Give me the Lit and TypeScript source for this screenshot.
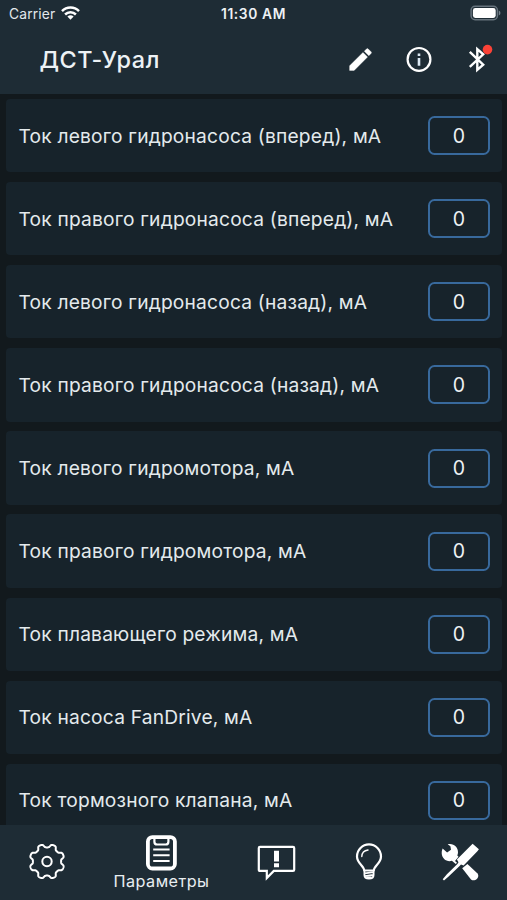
import { LitElement, html, css, svg } from "lit";
import { customElement } from "lit/decorators.js";
import { styleMap } from "lit/directives/style-map.js";

interface Param {
  label: string;
  value: number;
}

const PARAMS: Param[] = [
  { label: "Ток левого гидронасоса (вперед), мА", value: 0 },
  { label: "Ток правого гидронасоса (вперед), мА", value: 0 },
  { label: "Ток левого гидронасоса (назад), мА", value: 0 },
  { label: "Ток правого гидронасоса (назад), мА", value: 0 },
  { label: "Ток левого гидромотора, мА", value: 0 },
  { label: "Ток правого гидромотора, мА", value: 0 },
  { label: "Ток плавающего режима, мА", value: 0 },
  { label: "Ток насоса FanDrive, мА", value: 0 },
  { label: "Ток тормозного клапана, мА", value: 0 },
];

/** Outline of an eight-toothed cog centred on (20, 20). */
function gearPath(): string {
  const points: string[] = [];
  for (let i = 0; i < 240; i++) {
    const a = (i / 240) * Math.PI * 2;
    const wave = Math.tanh(-2 * Math.cos(8 * a)) / Math.tanh(2);
    const r = 15.8 + 1.7 * wave;
    points.push(`${(20 + r * Math.cos(a)).toFixed(2)} ${(19.5 + r * Math.sin(a)).toFixed(2)}`);
  }
  return `M${points.join("L")}Z`;
}
const GEAR = gearPath();

@customElement("status-bar")
class StatusBar extends LitElement {
  static styles = css`
    :host {
      display: grid;
      grid-template-columns: 1fr auto 1fr;
      align-items: center;
      height: 28px;
      padding: 0 6px 0 9px;
      font-size: 13.8px;
      color: #e2e8ec;
    }
    .carrier { display: flex; align-items: center; gap: 6px; letter-spacing: 0.15px; }
    .time { font-weight: 600; font-size: 13.8px; letter-spacing: 0.6px; color: #edf1f4; margin: -1px 0 0 -3px; }
    .battery { justify-self: end; margin-top: -2px; }
    svg { display: block; }
    .wifi { margin-top: -2px; }
  `;
  render() {
    return html`
      <div class="carrier">
        <span>Carrier</span>
        <svg class="wifi" width="19" height="14" viewBox="0 0 19 14" fill="none" stroke="#fff" stroke-width="2.5">
          <path d="M1 5.1a12 12 0 0 1 17 0" />
          <path d="M4.1 8.5a7.6 7.6 0 0 1 10.8 0" />
          <path d="M9.5 13.7 6.4 10.6a4.5 4.5 0 0 1 6.2 0Z" fill="#fff" stroke="none" />
        </svg>
      </div>
      <div class="time">11:30 AM</div>
      <svg class="battery" width="31" height="16" viewBox="0 0 31 16">
        <rect x="1.1" y="1.3" width="26.3" height="13.4" rx="4" fill="none" stroke="#66737d" stroke-width="1.5" />
        <rect x="2.9" y="3.1" width="22.8" height="9.8" rx="2.4" fill="#fff" />
        <path d="M28.8 5.6q1.7.8 1.7 2.4t-1.7 2.4Z" fill="#73808a" />
      </svg>
    `;
  }
}

@customElement("app-header")
class AppHeader extends LitElement {
  static styles = css`
    :host {
      display: flex;
      align-items: center;
      height: 66px;
      padding: 0 13px 4px 39.5px;
      box-sizing: border-box;
    }
    h1 {
      flex: 1;
      margin: 0;
      font-size: 23.4px;
      font-weight: 500;
      line-height: 30px;
      letter-spacing: 0.55px;
      color: #edf2f5;
      padding-top: 2px;
    }
    .actions { display: flex; gap: 28px; }
    svg { display: block; }
  `;
  render() {
    return html`
      <h1>ДСТ-Урал</h1>
      <div class="actions">
        <svg width="31" height="31" viewBox="-0.8 -0.8 25.6 25.6" fill="#fff">
          <path d="M3 17.25V21h3.75L17.81 9.94l-3.75-3.75L3 17.25zM20.71 7.04a1 1 0 0 0 0-1.41l-2.34-2.34a1 1 0 0 0-1.41 0l-1.83 1.83 3.75 3.75 1.83-1.83z" stroke="#fff" stroke-width=".3" />
        </svg>
        <svg width="31" height="31" viewBox="0 0 31 31">
          <circle cx="15" cy="15.4" r="11.4" fill="none" stroke="#fff" stroke-width="2.2" />
          <path d="M13.7 9.4h2.6v2.5h-2.6zM13.7 14h2.6v7.8h-2.6z" fill="#dce9f3" />
        </svg>
        <svg width="31" height="31" viewBox="0 0 31 31">
          <path d="M6.8 7.9 20.2 20.6l-5.9 5.2V5.2l5.9 5.1L6.8 22.9" fill="none" stroke="#fff" stroke-width="2.4" />
          <circle cx="24.5" cy="5.6" r="4.8" fill="#fb4237" />
        </svg>
      </div>
    `;
  }
}

@customElement("param-list")
class ParamList extends LitElement {
  static styles = css`
    :host {
      display: flex;
      flex-direction: column;
      gap: 9.8px;
      padding: 5px 5.5px 0 6px;
      overflow: hidden;
      background: #12191d;
    }
    .card {
      flex: none;
      display: flex;
      align-items: center;
      justify-content: space-between;
      height: 73.3px;
      box-sizing: border-box;
      padding: 0 11.5px 0 12.5px;
      border-radius: 4px;
      background: #17232b;
    }
    .label { font-size: 19.2px; letter-spacing: 0.19px; color: #e4eaed; white-space: nowrap; }
    .value {
      width: 62px;
      height: 39px;
      box-sizing: border-box;
      border: 2px solid #38699c;
      border-radius: 6.5px;
      display: grid;
      place-items: center;
      font-size: 19.5px;
      color: #eef2f4;
    }
  `;
  render() {
    return PARAMS.map(
      (p) => html`<div class="card"><span class="label">${p.label}</span><span class="value">${p.value}</span></div>`
    );
  }
}

const TABS = [
  {
    width: 94,
    icon: svg`
      <path d=${GEAR} fill="none" stroke="#fff" stroke-width="2" stroke-linejoin="round"/>
      <circle cx="20" cy="19.5" r="4.7" fill="none" stroke="#fff" stroke-width="2"/>`,
  },
  {
    width: 135,
    label: "Параметры",
    icon: svg`
      <rect x="5.9" y="3.1" width="27" height="31.4" rx="4.5" fill="none" stroke="#fff" stroke-width="3.8"/>
      <path d="M12.4 4.5v3.2q0 2.8 2.8 2.8h8.4q2.8 0 2.8-2.8V4.5" fill="none" stroke="#fff" stroke-width="2.2"/>
      <path d="M11.2 15.6h16.4M11.2 21.3h16.4M11.2 27h16.4" stroke="#fff" stroke-width="2"/>`,
  },
  {
    width: 96,
    icon: svg`
      <path d="M3 4.9h33q1.2 0 1.2 1.2v21.6q0 1.2-1.2 1.2H16.8L9.8 36V28.9H3Q1.8 28.9 1.8 27.7V6.1q0-1.2 1.2-1.2Z" fill="none" stroke="#fff" stroke-width="2.2" stroke-linejoin="miter"/>
      <path d="M17 8.8h5v10.6h-5zM17 21.2h5v4h-5z" fill="#fff"/>`,
  },
  {
    width: 88,
    icon: svg`
      <path d="M15.2 28.5C15.2 23.8 8 21.4 8 14.4a12 12 0 0 1 24 0c0 7-7.2 9.4-7.2 14.1Z" fill="none" stroke="#fff" stroke-width="2.2" stroke-linejoin="round"/>
      <path d="M12.8 14.5q.2-5.6 6.2-6.5" fill="none" stroke="#fff" stroke-width="1.4" stroke-linecap="round"/>
      <path d="M15.4 28.5v4.5q0 3.6 4.6 3.6t4.6-3.6v-4.5M16 31.4l8-1.2M16 34.2l8-1.2" fill="none" stroke="#fff" stroke-width="1.8" stroke-linejoin="round"/>
      <path d="M17.5 34.5h5v2h-5z" fill="#fff"/>`,
  },
  {
    width: 94,
    icon: svg`
      <g fill="#fff">
        <path d="M32.6 1.8 38.9 7.3 37.4 9.2 23.6 23.6 21 22.6 19.6 24.1 8.6 34.4 4 38.4 2.7 37.3 6.9 32.2 17.4 21.9 18.5 20.2 16.9 17.6Z"/>
        <path d="M2.6 6.4 7.1 10.4 11 7.8 10.4 4.2 7.7 2.3C13.5.9 18.2 5 18 10.5Q17.9 12 17.3 13.4L18.5 14.8 15 18.9 17 20.8 15.8 22 11.9 18.8C6.8 20.3 2 16.6 1.7 11.2Q1.7 8.4 2.6 6.4Z"/>
        <path d="M22.2 26.2 27.4 22 37.3 31.3C40.6 34.8 35 40.6 31 37.4Z"/>
      </g>`,
  },
];

@customElement("tab-bar")
class TabBar extends LitElement {
  static styles = css`
    :host {
      display: flex;
      height: 75px;
      background: #1e2c35;
    }
    .tab {
      flex: none;
      display: flex;
      flex-direction: column;
      align-items: center;
      justify-content: center;
      padding-bottom: 2px;
      box-sizing: border-box;
    }
    svg { display: block; flex: none; }
    .text {
      font-size: 16.2px;
      line-height: 18px;
      letter-spacing: 0.45px;
      color: #e8eef1;
      margin-top: -2px;
    }
  `;
  render() {
    return TABS.map(
      (t) => html`<div class="tab" style=${styleMap({ width: `${t.width}px` })}>
        <svg width="40" height="40" viewBox="0 0 40 40">${t.icon}</svg>
        ${t.label ? html`<span class="text">${t.label}</span>` : null}
      </div>`
    );
  }
}

@customElement("app-root")
class AppRoot extends LitElement {
  static styles = css`
    :host {
      display: flex;
      flex-direction: column;
      height: 900px;
      overflow: hidden;
      background: #1e2c35;
      font-family: Inter, "Liberation Sans", sans-serif;
    }
    param-list { flex: 1; min-height: 0; }
    status-bar, app-header, tab-bar { flex: none; }
  `;
  render() {
    return html`
      <status-bar></status-bar>
      <app-header></app-header>
      <param-list></param-list>
      <tab-bar></tab-bar>
    `;
  }
}
